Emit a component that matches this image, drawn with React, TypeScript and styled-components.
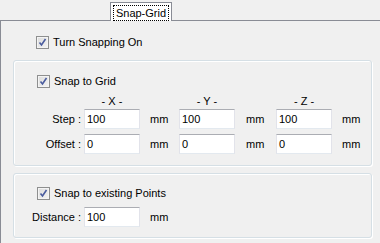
import React from "react";
import styled, { createGlobalStyle } from "styled-components";

const Global = createGlobalStyle`
  html, body { margin: 0; padding: 0; }
  body {
    background: #f0f0f0;
    font-family: "Liberation Sans", Arial, sans-serif;
    font-size: 11px;
    color: #000;
    width: 380px;
    height: 243px;
    overflow: hidden;
  }
`;

const Window = styled.div`
  width: 380px;
  height: 243px;
  display: flex;
  flex-direction: column;
  background: #f0f0f0;
`;

const TabStrip = styled.div`
  display: flex;
  height: 20px;
  padding-left: 110px;
  align-items: flex-end;
`;

const Tab = styled.div`
  box-sizing: border-box;
  width: 62px;
  height: 19px;
  border: 1px solid #898c95;
  border-bottom: none;
  background: #ffffff;
  display: flex;
  padding: 2px 2px 0 2px;
  margin-bottom: -1px;
  position: relative;
  z-index: 1;
`;

const TabFocus = styled.div`
  flex: 1;
  border: 1px dotted #000;
  border-bottom: 1px dotted #000;
  display: flex;
  align-items: center;
  justify-content: center;
  line-height: 13px;
  height: 14px;
`;

const Page = styled.div`
  flex: 1;
  border-top: 1px solid #898c95;
  border-left: 1px solid #898c95;
  display: flex;
  flex-direction: column;
  padding: 15px 8px 0 12px;
`;

const CheckRow = styled.label<{ $indent?: number }>`
  display: flex;
  align-items: center;
  height: 13px;
  padding-left: ${(p) => p.$indent ?? 23}px;
  gap: 4px;
  line-height: 13px;
`;

const Box = styled.span`
  box-sizing: border-box;
  width: 13px;
  height: 13px;
  border: 1px solid #8e8f8f;
  background: linear-gradient(135deg, #dcdcdc 0%, #f4f4f4 100%);
  box-shadow: inset 0 0 0 1px #f4f4f4;
  display: flex;
  align-items: center;
  justify-content: center;
`;

const Group = styled.div<{ $h: number; $mt: number; $pt: number }>`
  box-sizing: border-box;
  width: 359px;
  height: ${(p) => p.$h}px;
  margin-top: ${(p) => p.$mt}px;
  padding-top: ${(p) => p.$pt}px;
  border: 1px solid #d5dfe5;
  border-radius: 3px;
  box-shadow: inset 1px 1px 0 #ffffff, 1px 1px 0 #ffffff;
  display: flex;
  flex-direction: column;
`;

const Grid = styled.div<{ $mt: number }>`
  display: grid;
  grid-template-columns: 70px 56px 39px 56px 41px 56px auto;
  margin-top: ${(p) => p.$mt}px;
  row-gap: 0;
`;

const Header = styled.div<{ $col: number }>`
  grid-column: ${(p) => p.$col};
  text-align: center;
  line-height: 13px;
  height: 13px;
  margin-bottom: 1px;
`;

const Label = styled.div<{ $mt?: number }>`
  grid-column: 1;
  text-align: right;
  padding-right: 3px;
  height: 20px;
  line-height: 20px;
  margin-top: ${(p) => p.$mt ?? 0}px;
`;

const Input = styled.div<{ $mt?: number }>`
  box-sizing: border-box;
  height: 20px;
  margin-top: ${(p) => p.$mt ?? 0}px;
  background: #fff;
  border: 1px solid #e2e3ea;
  border-top-color: #abadb3;
  border-bottom-color: #e3e9ef;
  padding-left: 2px;
  line-height: 18px;
  color: #000;
`;

const Unit = styled.div<{ $pl: number; $mt?: number }>`
  padding-left: ${(p) => p.$pl}px;
  height: 20px;
  line-height: 21px;
  margin-top: ${(p) => p.$mt ?? 0}px;
`;

const Check = () => (
  <Box>
    <svg width="9" height="9" viewBox="0 0 9 9">
      <path d="M1.5 4.5 L3.5 7 L7.5 1" fill="none" stroke="#4a5c9e" strokeWidth="1.6" />
    </svg>
  </Box>
);

const units = [10, 11, 10];

export default function App() {
  const rows = [
    { label: "Step :", values: ["100", "100", "100"], mt: 0 },
    { label: "Offset :", values: ["0", "0", "0"], mt: 5 },
  ];
  return (
    <Window>
      <Global />
      <TabStrip>
        <Tab>
          <TabFocus>Snap-Grid</TabFocus>
        </Tab>
      </TabStrip>
      <Page>
        <CheckRow>
          <Check />
          <span>Turn Snapping On</span>
        </CheckRow>
        <Group $h={106} $mt={11} $pt={14}>
          <CheckRow>
            <Check />
            <span>Snap to Grid</span>
          </CheckRow>
          <Grid $mt={7}>
            <Header $col={2}>- X -</Header>
            <Header $col={4}>- Y -</Header>
            <Header $col={6}>- Z -</Header>
            {rows.map((r) => (
              <React.Fragment key={r.label}>
                <Label $mt={r.mt}>{r.label}</Label>
                {r.values.map((v, i) => (
                  <React.Fragment key={i}>
                    <Input $mt={r.mt}>{v}</Input>
                    <Unit $pl={units[i]} $mt={r.mt}>mm</Unit>
                  </React.Fragment>
                ))}
              </React.Fragment>
            ))}
          </Grid>
        </Group>
        <Group $h={65} $mt={7} $pt={13}>
          <CheckRow>
            <Check />
            <span>Snap to existing Points</span>
          </CheckRow>
          <Grid $mt={7}>
            <Label>Distance :</Label>
            <Input>100</Input>
            <Unit $pl={10}>mm</Unit>
          </Grid>
        </Group>
      </Page>
    </Window>
  );
}
